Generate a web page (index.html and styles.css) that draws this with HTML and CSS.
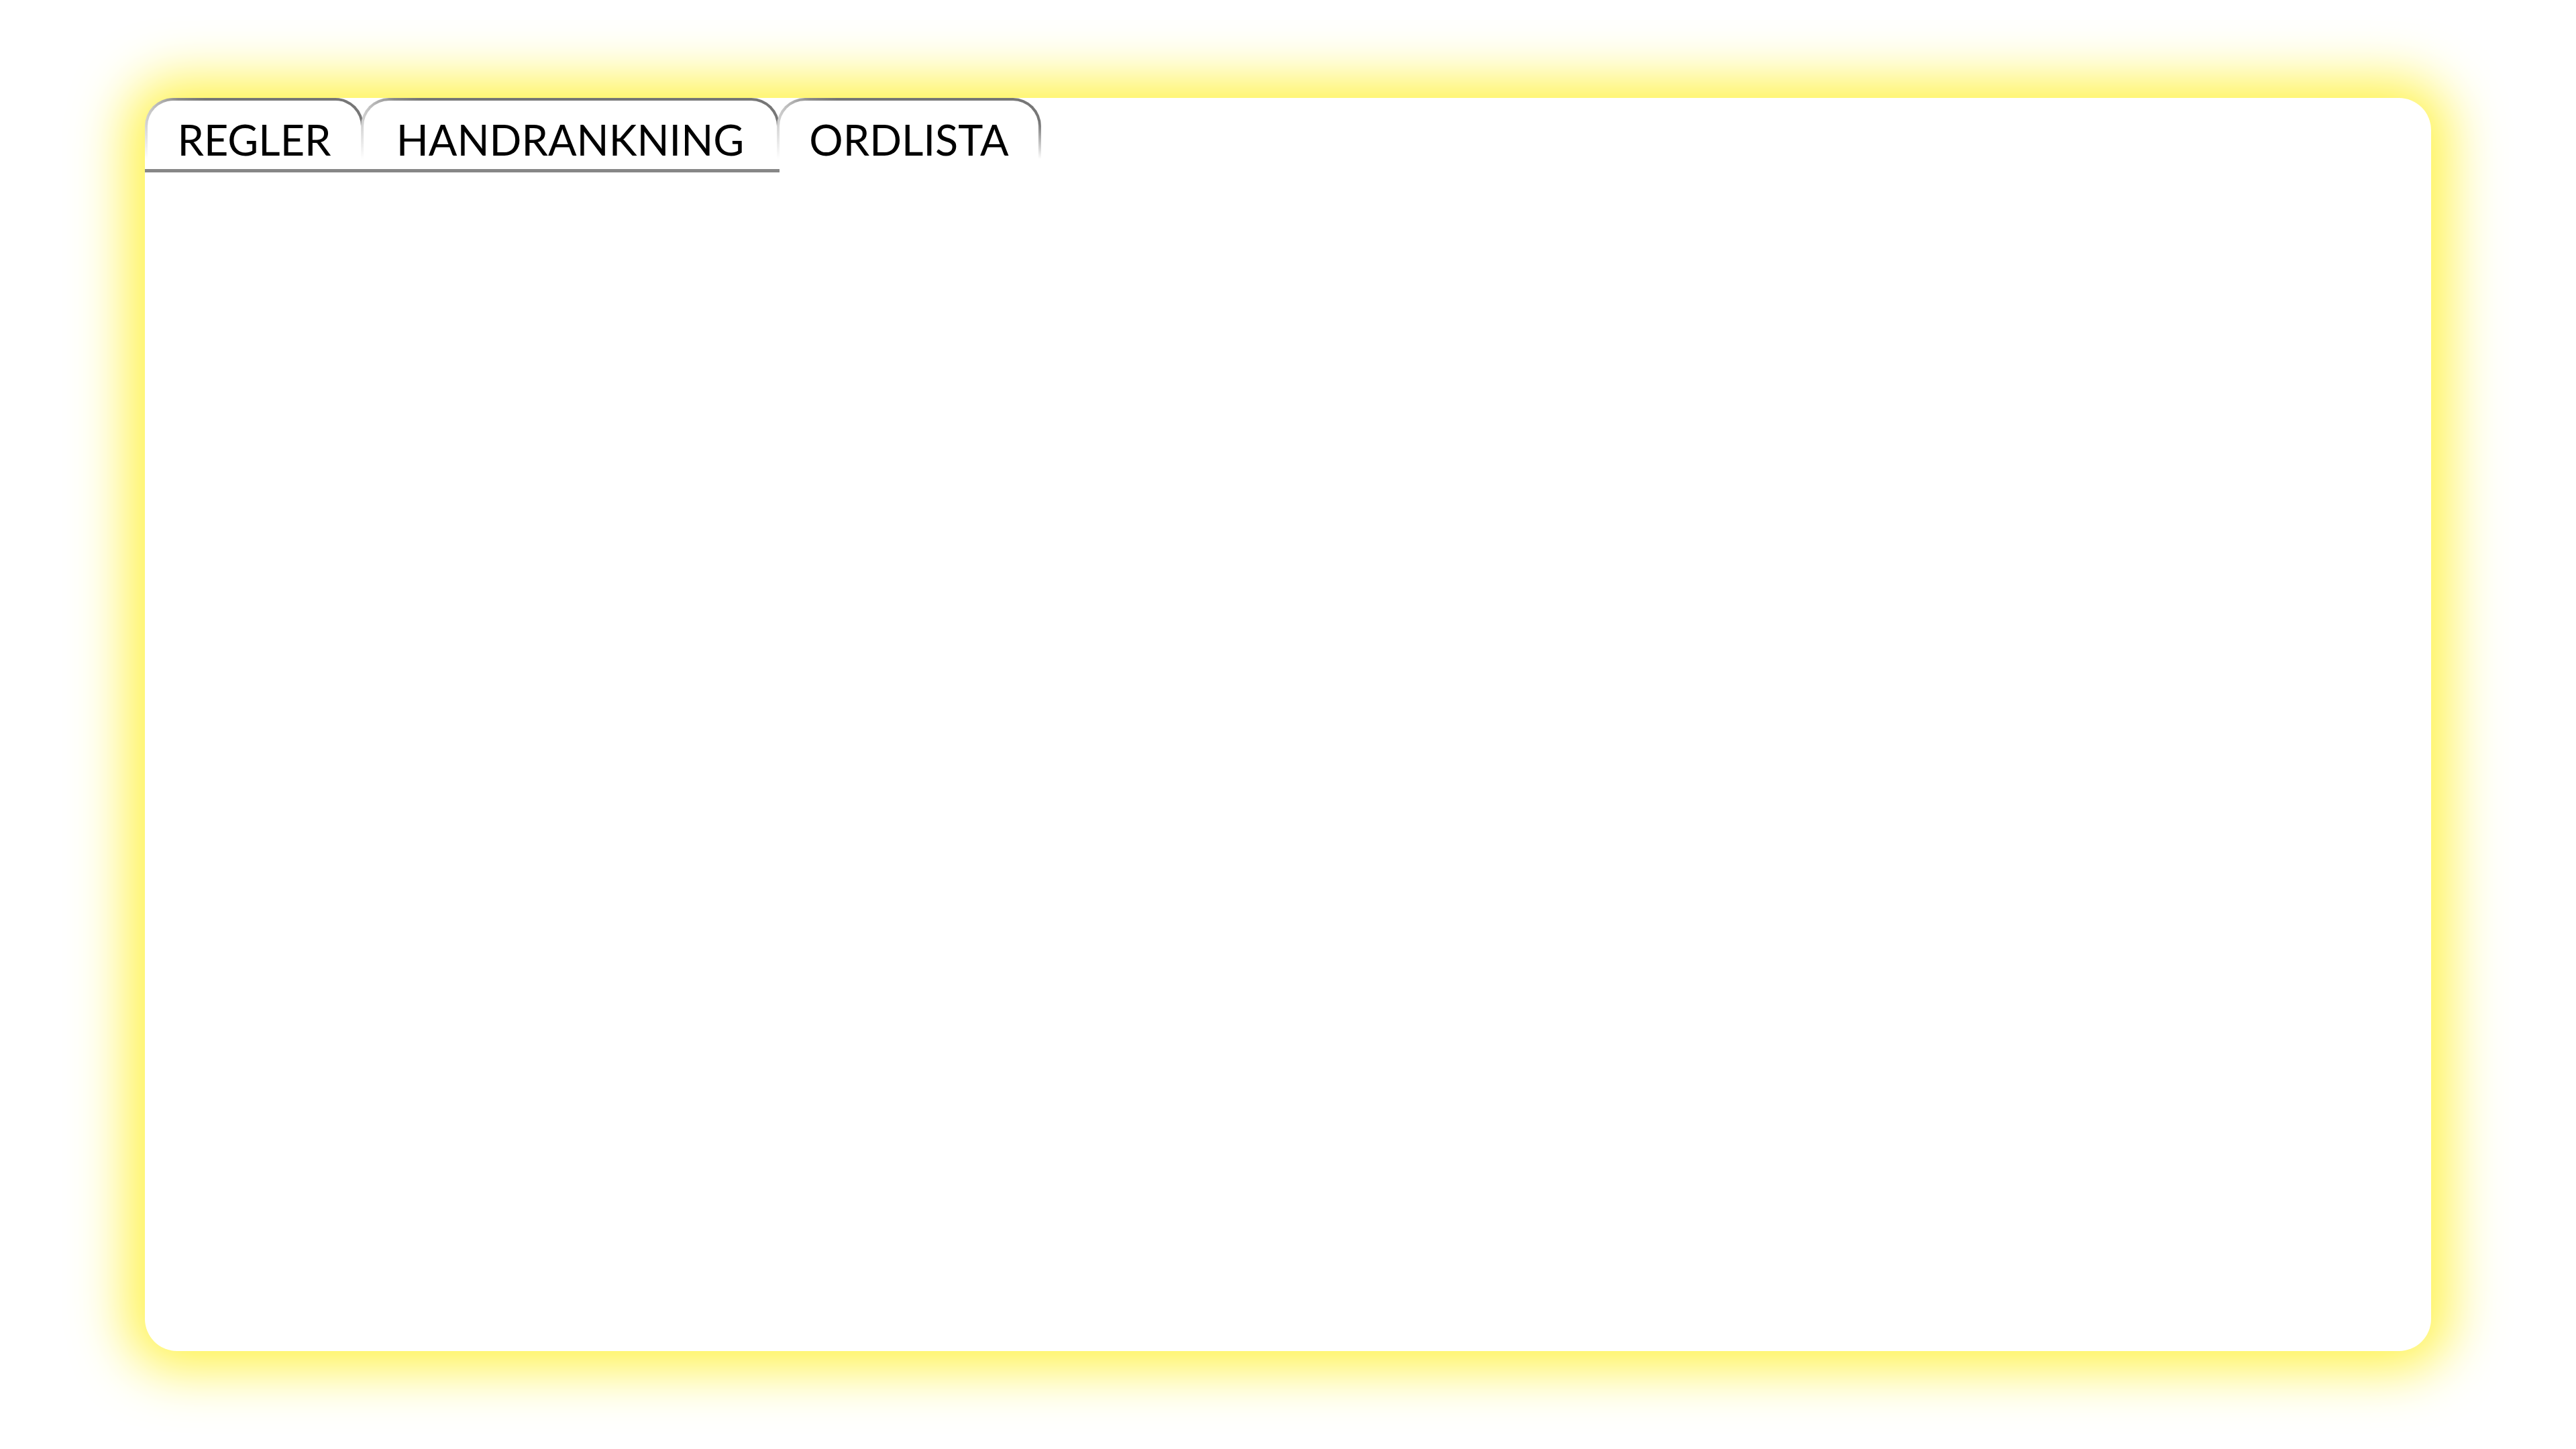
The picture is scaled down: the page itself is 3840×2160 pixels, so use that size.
FILE: index.html
```html
<!DOCTYPE html>
<html lang="sv">
<head>
<meta charset="utf-8">
<title>Regler</title>
<link rel="stylesheet" href="styles.css">
</head>
<body>
<main class="panel">
  <nav class="tabs">
    <div class="tab tab-inactive tab-rules">REGLER</div>
    <div class="tab tab-inactive tab-hands">HANDRANKNING</div>
    <div class="tab tab-active tab-words">ORDLISTA</div>
  </nav>
  <section class="content"></section>
</main>
</body>
</html>
```
FILE: styles.css
```css
html, body {
  margin: 0;
  padding: 0;
  background: #ffffff;
}

body {
  padding: 146px 216px;
  box-sizing: border-box;
  width: 3840px;
  height: 2160px;
}

.panel {
  height: 1868px;
  background: #ffffff;
  border-radius: 48px;
  box-shadow: 0 0 80px 28px #fff34d;
  display: flex;
  flex-direction: column;
}

.tabs {
  display: flex;
  align-items: flex-start;
}

.tab {
  box-sizing: border-box;
  height: 106px;
  padding-top: 26px;
  border: 4px solid transparent;
  border-bottom: 0;
  border-radius: 42px 42px 0 0;
  background:
    linear-gradient(#ffffff, #ffffff) padding-box,
    linear-gradient(to bottom, rgba(255, 255, 255, 0) 35%, #ffffff 86%) border-box,
    linear-gradient(to right, #d4d4d4 0, #8a8a8a 50px, #767676 90px, #767676 100%) border-box;
  font-family: Lato, "Liberation Sans", sans-serif;
  font-weight: 400;
  font-size: 63px;
  line-height: 63px;
  color: #000000;
  text-align: center;
  white-space: nowrap;
}

.tab + .tab {
  margin-left: -4px;
}

.tab-inactive {
  box-shadow: 0 5px 0 #878787;
}

.tab-rules {
  width: 326px;
}

.tab-hands {
  width: 624px;
}

.tab-words {
  width: 394px;
}

.content {
  flex: 1;
}
```
